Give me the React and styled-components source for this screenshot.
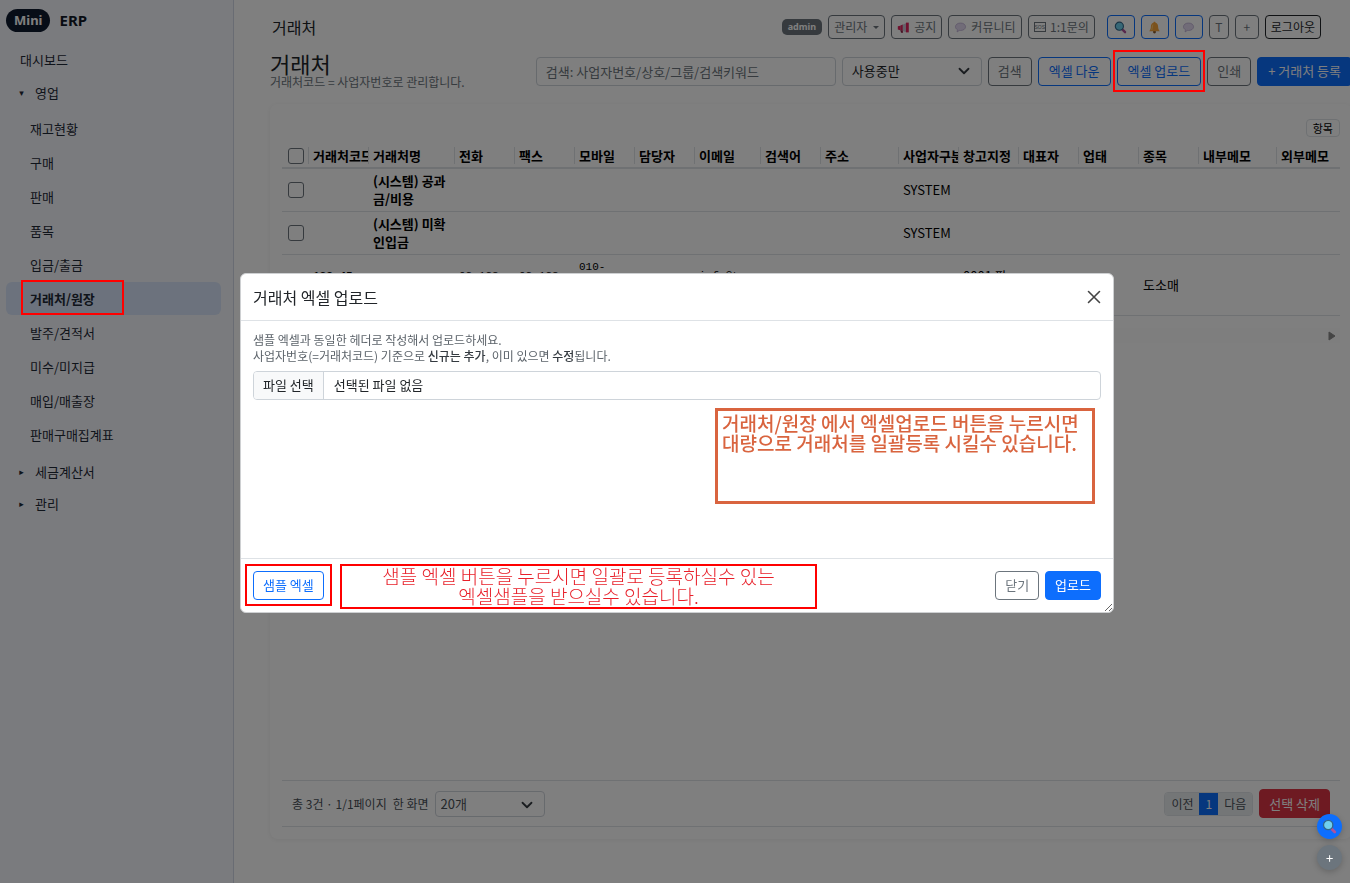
import React from "react";
import styled, { createGlobalStyle, css } from "styled-components";

const GlobalStyle = createGlobalStyle`
    *, *::before, *::after {
        box-sizing: border-box;
    }
    body {
        margin: 0;
        background: #fefefe;
        color: #212529;
        font-family: "Noto Sans CJK KR", "Noto Sans", sans-serif;
        font-size: 13px;
        line-height: 18px;
    }
    button, input, select {
        font: inherit;
        color: inherit;
    }
`

const salesMenu = [
    "재고현황",
    "구매",
    "판매",
    "품목",
    "입금/출금",
    "거래처/원장",
    "발주/견적서",
    "미수/미지급",
    "매입/매출장",
    "판매구매집계표",
];

const columns = [
    { label: "거래처코드", width: 60 },
    { label: "거래처명", width: 86 },
    { label: "전화", width: 60 },
    { label: "팩스", width: 60 },
    { label: "모바일", width: 60 },
    { label: "담당자", width: 60 },
    { label: "이메일", width: 66 },
    { label: "검색어", width: 60 },
    { label: "주소", width: 78 },
    { label: "사업자구분", width: 60 },
    { label: "창고지정", width: 60 },
    { label: "대표자", width: 60 },
    { label: "업태", width: 60 },
    { label: "종목", width: 60 },
    { label: "내부메모", width: 78 },
    { label: "외부메모", width: 64 },
];

const rows = [
    { name: "(시스템) 공과금/비용", kind: "SYSTEM" },
    { name: "(시스템) 미확인입금", kind: "SYSTEM" },
    {
        code: "123-45-67890",
        name: "샘플상사",
        phone: "02-123-4567",
        fax: "02-123-4568",
        mobile: "010-1234-5678",
        email: "info@test.com",
        store: "0001 판매",
        item: "도소매",
    },
];

function Magnifier({ size }) {
    return (
        <svg width={size} height={size} viewBox="0 0 16 16" aria-hidden="true">
            <path d="M9.6 9.8l4 4" stroke="#b0529a" strokeWidth="3" strokeLinecap="round" />
            <circle cx="6.6" cy="6.4" r="5" fill="#6fd0ee" stroke="#33688a" strokeWidth="1.4" />
        </svg>
    );
}

function Megaphone() {
    return (
        <svg width="13" height="13" viewBox="0 0 16 16" aria-hidden="true">
            <path d="M1 6.5l3-.8v5.6l-3-.8z" fill="#e0245e" />
            <path d="M4 5.7l7-3v11l-7-2.6z" fill="#c9c4d4" />
            <path d="M4 5.7l3-1.300v7.800l-3-1.100z" fill="#e0245e" />
            <path d="M11 2h3.500v12H11z" fill="#e0245e" />
            <path d="M4 11l1 3.500h2.500L7 12z" fill="#8d2145" />
        </svg>
    );
}

function Bubble() {
    return (
        <svg width="13" height="13" viewBox="0 0 16 16" aria-hidden="true">
            <path d="M8 2.500c3.600 0 6.200 2 6.200 4.600S11.600 11.700 8 11.700c-.5 0-1 0-1.500-.1L3.800 13.500l.4-2.800C2.700 9.900 1.800 8.600 1.800 7.100 1.800 4.500 4.400 2.500 8 2.500z" fill="#e2d8f0" stroke="#b3a3cc" strokeWidth=".8" />
        </svg>
    );
}

function Bell() {
    return (
        <svg width="13" height="13" viewBox="0 0 16 16" aria-hidden="true">
            <circle cx="8" cy="13.500" r="1.800" fill="#8a5a2b" />
            <path d="M8 1c-.9 0-1.300.6-1.300 1.300C4.300 3 3.600 5 3.500 7.500c-.1 2.300-.7 3.500-2 5h13c-1.300-1.500-1.900-2.700-2-5C12.400 5 11.700 3 9.300 2.300 9.300 1.600 8.900 1 8 1z" fill="#f7a53b" />
            <path d="M6 4.500C5.200 6 5.300 8.500 4.600 11" stroke="#ffd27a" strokeWidth="1.200" fill="none" />
        </svg>
    );
}

function Chevron() {
    return (
        <svg width="12" height="12" viewBox="0 0 16 16" fill="none" stroke="#343a40" strokeWidth="2.400" strokeLinecap="round" strokeLinejoin="round" aria-hidden="true">
            <path d="m2 5 6 6 6-6" />
        </svg>
    );
}

function Sidebar() {
    return (
        <Side>
            <Brand>
                <BrandBadge>Mini</BrandBadge>
                ERP
            </Brand>
            <Menu>
                <li><MenuLink href="#dashboard">대시보드</MenuLink></li>
                <li>
                    <GroupButton type="button" aria-expanded="true"><Caret>▾</Caret>영업</GroupButton>
                    <SubMenu>
                        {salesMenu.map((label) => {
                            const active = label === "거래처/원장";
                            return (
                                <SubItem key={label}>
                                    <MenuLink href="#menu" $sub $active={active}>{label}</MenuLink>
                                    {active && <MenuMarker />}
                                </SubItem>
                            );
                        })}
                    </SubMenu>
                </li>
                <li><GroupButton type="button" aria-expanded="false"><Caret>▸</Caret>세금계산서</GroupButton></li>
                <li><GroupButton type="button" aria-expanded="false"><Caret>▸</Caret>관리</GroupButton></li>
            </Menu>
        </Side>
    );
}

function TopBar() {
    return (
        <Top>
            <TopTitle>거래처</TopTitle>
            <UserBadge>admin</UserBadge>
            <SmallButton type="button">관리자 <DropCaret /></SmallButton>
            <SmallButton type="button"><Megaphone /> 공지</SmallButton>
            <SmallButton type="button"><Bubble /> 커뮤니티</SmallButton>
            <SmallButton type="button"><Sos>SOS</Sos>1:1문의</SmallButton>
            <IconGroup>
                <SmallButton type="button" $tone="#0d6efd" $min={28} aria-label="검색"><Magnifier size={13} /></SmallButton>
                <SmallButton type="button" $tone="#0d6efd" $min={28} aria-label="알림"><Bell /></SmallButton>
                <SmallButton type="button" $tone="#0d6efd" $min={28} aria-label="채팅"><Bubble /></SmallButton>
                <SmallButton type="button" $min={20}>T</SmallButton>
                <SmallButton type="button" $min={24}>+</SmallButton>
                <SmallButton type="button" $tone="#212529">로그아웃</SmallButton>
            </IconGroup>
        </Top>
    );
}

function CustomerTable() {
    return (
        <TableWrap>
            <Table>
                <colgroup>
                    <Col $width={27} />
                    {columns.map((c) => <Col key={c.label} $width={c.width} />)}
                </colgroup>
                <thead>
                    <tr>
                        <Th><Check type="checkbox" aria-label="전체 선택" /></Th>
                        {columns.map((c) => <Th key={c.label}>{c.label}</Th>)}
                    </tr>
                </thead>
                <tbody>
                    {rows.map((r) => (
                        <tr key={r.name}>
                            <Td><Check type="checkbox" aria-label={r.name} /></Td>
                            <Td $mono $bold>{r.code}</Td>
                            <Td $bold>{r.name}</Td>
                            <Td $mono>{r.phone}</Td>
                            <Td $mono>{r.fax}</Td>
                            <Td $mono>{r.mobile}</Td>
                            <Td />
                            <Td $mono>{r.email}</Td>
                            <Td />
                            <Td />
                            <Td>{r.kind}</Td>
                            <Td>{r.store}</Td>
                            <Td />
                            <Td />
                            <Td>{r.item}</Td>
                            <Td />
                            <Td />
                        </tr>
                    ))}
                </tbody>
            </Table>
            <ScrollTrack>
                <svg width="8" height="10" viewBox="0 0 8 10" aria-hidden="true">
                    <path d="M1 1v8l6-4z" fill="#8b8b8b" stroke="#8b8b8b" strokeLinejoin="round" />
                </svg>
            </ScrollTrack>
        </TableWrap>
    );
}

function UploadModal() {
    return (
        <Backdrop>
            <Dialog role="dialog" aria-labelledby="upload-title">
                <DialogHeader>
                    <DialogTitle id="upload-title">거래처 엑셀 업로드</DialogTitle>
                    <CloseButton type="button" aria-label="닫기">
                        <svg width="14" height="14" viewBox="0 0 14 14" stroke="#444" strokeWidth="1.600" strokeLinecap="round">
                            <path d="M1.500 1.500l11 11M12.500 1.500l-11 11" />
                        </svg>
                    </CloseButton>
                </DialogHeader>
                <DialogBody>
                    <Help>
                        샘플 엑셀과 동일한 헤더로 작성해서 업로드하세요.<br />
                        사업자번호(=거래처코드) 기준으로 <b>신규는 추가</b>, 이미 있으면 <b>수정</b>됩니다.
                    </Help>
                    <FileField htmlFor="excel-file">
                        <FileButton>파일 선택</FileButton>
                        <FileName>선택된 파일 없음</FileName>
                        <FileInput id="excel-file" type="file" />
                    </FileField>
                    <BodyNote>
                        거래처/원장 에서 엑셀업로드 버튼을 누르시면<br />
                        대량으로 거래처를 일괄등록 시킬수 있습니다.
                    </BodyNote>
                </DialogBody>
                <DialogFooter>
                    <Marked>
                        <Button type="button" $tone="#0d6efd">샘플 엑셀</Button>
                        <Marker $side={8} />
                    </Marked>
                    <FooterNote>
                        샘플 엑셀 버튼을 누르시면 일괄로 등록하실수 있는<br />
                        엑셀샘플을 받으실수 있습니다.
                    </FooterNote>
                    <FooterActions>
                        <Button type="button">닫기</Button>
                        <Button type="button" $tone="#0d6efd" $solid>업로드</Button>
                    </FooterActions>
                </DialogFooter>
            </Dialog>
        </Backdrop>
    );
}

function App() {
    return (
        <Page>
            <GlobalStyle />
            <Sidebar />
            <Main>
                <TopBar />
                <Content>
                    <Toolbar>
                        <Heading>
                            <h1>거래처</h1>
                            <p>거래처코드 = 사업자번호로 관리합니다.</p>
                        </Heading>
                        <SearchInput type="search" aria-label="검색어" placeholder="검색: 사업자번호/상호/그룹/검색키워드" />
                        <SelectBox $width={140}>
                            <select aria-label="사용 여부" defaultValue="use">
                                <option value="use">사용중만</option>
                            </select>
                            <Chevron />
                        </SelectBox>
                        <Button type="button">검색</Button>
                        <Button type="button" $tone="#0d6efd" $wide>엑셀 다운</Button>
                        <Marked>
                            <Button type="button" $tone="#0d6efd" $wide>엑셀 업로드</Button>
                            <Marker $side={4} />
                        </Marked>
                        <Button type="button">인쇄</Button>
                        <Button type="button" $tone="#0d6efd" $solid $wide>+ 거래처 등록</Button>
                    </Toolbar>
                    <Card>
                        <ColumnsButton type="button">항목</ColumnsButton>
                        <CustomerTable />
                        <CardFooter>
                            <span>총 3건 · 1/1페이지</span>
                            <label htmlFor="page-size">한 화면</label>
                            <SelectBox $width={110} $small>
                                <select id="page-size" defaultValue="20">
                                    <option value="20">20개</option>
                                </select>
                                <Chevron />
                            </SelectBox>
                            <Pager>
                                <PageButton type="button">이전</PageButton>
                                <PageButton type="button" $current>1</PageButton>
                                <PageButton type="button">다음</PageButton>
                            </Pager>
                            <Button type="button" $tone="#dc3545" $solid>선택 삭제</Button>
                        </CardFooter>
                    </Card>
                </Content>
            </Main>
            <UploadModal />
            <FloatingButtons>
                <RoundButton type="button" $tone="#0d6efd" aria-label="빠른 검색"><Magnifier size={15} /></RoundButton>
                <RoundButton type="button" $tone="#6c757d">+</RoundButton>
            </FloatingButtons>
        </Page>
    );
}

export default App

const Page = styled.div`
    display: flex;
    min-height: 100vh;
    overflow: hidden;
`
const Side = styled.aside`
    flex: 0 0 234px;
    padding: 9px 12px 9px 6px;
    background: #f5f7fc;
    border-right: 1px solid #d3d9e6;
    color: #1f2937;
`
const Brand = styled.div`
    display: flex;
    align-items: center;
    gap: 9px;
    margin-bottom: 11px;
    font-family: "Noto Sans", sans-serif;
    font-size: 15px;
    font-weight: 700;
    line-height: 23px;
    color: #111827;
`
const BrandBadge = styled.span`
    padding: 0 8px;
    border-radius: 12px;
    background: #0f1a2e;
    color: #fff;
    font-size: 13px;
`
const Menu = styled.ul`
    display: flex;
    flex-direction: column;
    gap: 1px;
    margin: 0;
    padding: 0;
    list-style: none;
`
const SubMenu = styled(Menu)`
    padding: 4px 0;
`
const SubItem = styled.li`
    position: relative;
`
const menuEntry = css`
    display: flex;
    align-items: center;
    width: 100%;
    border-radius: 6px;
    color: inherit;
`
const MenuLink = styled.a`
    ${menuEntry}
    height: 33px;
    padding: 0 ${(p) => (p.$sub ? 24 : 14)}px;
    background: ${(p) => (p.$active ? "#d8e5fa" : "transparent")};
    font-weight: ${(p) => (p.$active ? 700 : 400)};
    text-decoration: none;
`
const GroupButton = styled.button`
    ${menuEntry}
    height: 31px;
    gap: 10px;
    padding: 0 12px;
    border: 0;
    background: none;
`
const Caret = styled.span`
    width: 7px;
    font-family: "DejaVu Sans", sans-serif;
    font-size: 9px;
`
const redFrame = css`
    position: absolute;
    z-index: 20;
    border: 2px solid #f00;
    pointer-events: none;
`
const MenuMarker = styled.span`
    ${redFrame}
    inset: -2px 97px 0 15px;
`
const Marker = styled.span`
    ${redFrame}
    inset: -7px -${(p) => p.$side}px -6px;
`
const Marked = styled.span`
    position: relative;
    display: inline-flex;
`
const Main = styled.main`
    flex: 1;
    min-width: 0;
    display: flex;
    flex-direction: column;
    padding-left: 36px;
`
const Top = styled.header`
    display: flex;
    align-items: center;
    gap: 6px;
    padding: 15px 29px 0 2px;
`
const TopTitle = styled.div`
    margin-right: auto;
    font-size: 16px;
    line-height: 24px;
`
const UserBadge = styled.span`
    padding: 0 6px;
    border-radius: 5px;
    background: #6c757d;
    color: #fff;
    font-family: "Noto Sans", sans-serif;
    font-size: 9px;
    font-weight: 700;
    line-height: 16px;
`
const SmallButton = styled.button`
    display: inline-flex;
    align-items: center;
    justify-content: center;
    gap: 4px;
    min-width: ${(p) => p.$min || 0}px;
    height: 24px;
    padding: 0 5px;
    border: 1px solid ${(p) => p.$tone || "#6c757d"};
    border-radius: 4px;
    background: transparent;
    color: ${(p) => p.$tone || "#6c757d"};
    font-size: 12px;
    white-space: nowrap;
`
const DropCaret = styled.span`
    margin-left: 2px;
    border: 3px solid transparent;
    border-top-color: currentColor;
    border-bottom: 0;
`
const Sos = styled.span`
    border: 1px solid currentColor;
    font-family: "Liberation Sans Narrow", "Liberation Sans", sans-serif;
    font-size: 5px;
    line-height: 8px;
`
const IconGroup = styled.div`
    display: flex;
    gap: 6px;
    margin-left: 6px;
`
const Content = styled.section`
    flex: 1;
    display: flex;
    flex-direction: column;
    margin-right: -2px;
    padding-bottom: 44px;
`
const Toolbar = styled.div`
    display: flex;
    align-items: center;
    gap: 6px;
    padding-top: 13px;
`
const Heading = styled.div`
    flex: 1;
    white-space: nowrap;
    h1 {
        margin: 0;
        font-size: 22px;
        font-weight: 400;
        line-height: 22px;
    }
    p {
        margin: 0;
        color: #6c757d;
        font-size: 12px;
        line-height: 16px;
    }
`
const SearchInput = styled.input`
    width: 300px;
    height: 29px;
    padding: 0 9px;
    border: 1px solid #ced4da;
    border-radius: 4px;
    background: transparent;
    &::placeholder {
        color: #6c757d;
        opacity: 1;
    }
`
const SelectBox = styled.div`
    position: relative;
    width: ${(p) => p.$width}px;
    select {
        width: 100%;
        height: ${(p) => (p.$small ? 26 : 29)}px;
        padding: 0 ${(p) => (p.$small ? 5 : 9)}px;
        border: 1px solid #ced4da;
        border-radius: 4px;
        background: transparent;
        appearance: none;
    }
    svg {
        position: absolute;
        top: 8px;
        right: 12px;
        pointer-events: none;
    }
`
const Button = styled.button`
    height: 29px;
    padding: 0 ${(p) => (p.$wide ? 10 : 9)}px;
    border: 1px solid ${(p) => p.$tone || "#6c757d"};
    border-radius: 4px;
    background: ${(p) => (p.$solid ? p.$tone : "transparent")};
    color: ${(p) => (p.$solid ? "#fff" : p.$tone || "#6c757d")};
    white-space: nowrap;
`
const Card = styled.div`
    flex: 1;
    display: flex;
    flex-direction: column;
    margin-top: 14px;
    padding: 15px 12px 12px;
    border-radius: 8px;
    background: #fff;
    box-shadow: 0 1px 4px rgba(0, 0, 0, 0.06);
`
const ColumnsButton = styled.button`
    align-self: flex-end;
    height: 18px;
    padding: 0 6px;
    border: 1px solid #dee2e6;
    border-radius: 4px;
    background: transparent;
    color: #000;
    font-size: 11px;
    line-height: 14px;
`
const TableWrap = styled.div`
    flex: 1;
    margin-top: 7px;
    overflow: hidden;
`
const Table = styled.table`
    width: 100%;
    border-collapse: separate;
    border-spacing: 0;
    table-layout: fixed;
    color: #000;
`
const Col = styled.col`
    width: ${(p) => p.$width}px;
`
const Th = styled.th`
    position: relative;
    height: 25px;
    padding: 0 4px;
    border-bottom: 2px solid #dee2e6;
    overflow: hidden;
    text-align: left;
    white-space: nowrap;
    &:not(:last-child)::after {
        content: "";
        position: absolute;
        top: 3px;
        right: 0;
        height: 17px;
        border-right: 1px solid #dee2e6;
    }
`
const Td = styled.td`
    height: 43px;
    padding: 3px 4px;
    border-bottom: 1px solid #dee2e6;
    font-weight: ${(p) => (p.$bold ? 700 : 400)};
    vertical-align: middle;
    word-break: break-all;
    ${(p) => p.$mono && css`
        font-family: "Liberation Mono", monospace;
        font-size: 11px;
        word-break: normal;
        overflow-wrap: anywhere;
    `}
`
const Check = styled.input`
    display: block;
    width: 16px;
    height: 16px;
    margin: 0 2px;
    border: 1px solid #6c757d;
    border-radius: 3px;
    appearance: none;
`
const ScrollTrack = styled.div`
    display: flex;
    align-items: center;
    justify-content: flex-end;
    height: 15px;
    margin-top: 12px;
    padding: 0 4px;
    background: #fcfcfc;
`
const CardFooter = styled.div`
    display: flex;
    align-items: center;
    gap: 6px;
    height: 47px;
    padding: 0 10px;
    border: 1px solid #dee2e6;
    border-width: 1px 0;
    color: #495057;
    font-size: 12px;
    select, button {
        font-size: 13px;
    }
`
const Pager = styled.div`
    display: flex;
    margin-left: auto;
    border: 1px solid #dee2e6;
    border-radius: 4px;
    overflow: hidden;
`
const PageButton = styled.button`
    && {
        height: 22px;
        padding: 0 6px;
        border: 0;
        background: ${(p) => (p.$current ? "#0d6efd" : "#e9ecef")};
        color: ${(p) => (p.$current ? "#fff" : "#495057")};
        font-size: 12px;
    }
`
const Backdrop = styled.div`
    position: fixed;
    inset: 0;
    z-index: 10;
    display: flex;
    align-items: center;
    justify-content: center;
    padding: 16px 12px 14px 16px;
    background: rgba(0, 0, 0, 0.5);
`
const Dialog = styled.div`
    display: flex;
    flex-direction: column;
    width: 100%;
    max-width: 874px;
    min-height: 340px;
    border: 1px solid #ced0d2;
    border-radius: 6px;
    background: #fff;
    overflow: hidden;
    resize: both;
`
const DialogHeader = styled.div`
    display: flex;
    align-items: center;
    justify-content: space-between;
    height: 47px;
    padding: 0 12px;
    border-bottom: 1px solid #dee2e6;
`
const DialogTitle = styled.h2`
    margin: 0;
    font-size: 16px;
    font-weight: 400;
    line-height: 24px;
`
const CloseButton = styled.button`
    display: flex;
    padding: 0;
    border: 0;
    background: none;
`
const DialogBody = styled.div`
    flex: 1;
    position: relative;
    padding: 11px 12px;
`
const Help = styled.p`
    margin: 0 0 7px;
    color: #5c636a;
    font-size: 12px;
    line-height: 16px;
    b {
        color: #343a40;
        font-weight: 500;
    }
`
const FileField = styled.label`
    position: relative;
    display: flex;
    height: 29px;
    border: 1px solid #ced4da;
    border-radius: 4px;
    line-height: 26px;
    overflow: hidden;
`
const FileButton = styled.span`
    padding: 0 9px;
    border-right: 1px solid #ced4da;
    background: #f8f9fa;
`
const FileName = styled.span`
    padding: 0 10px;
`
const FileInput = styled.input`
    position: absolute;
    inset: 0;
    opacity: 0;
`
const BodyNote = styled.div`
    position: absolute;
    top: 87px;
    right: 18px;
    width: 380px;
    height: 96px;
    padding: 2px 4px;
    border: 3px solid #d9643f;
    color: #d9643f;
    font-size: 19px;
    font-weight: 500;
    line-height: 20px;
    white-space: nowrap;
`
const DialogFooter = styled.div`
    position: relative;
    display: flex;
    align-items: center;
    height: 54px;
    padding: 0 12px;
    border-top: 1px solid #dee2e6;
`
const FooterNote = styled.div`
    position: absolute;
    top: 5px;
    left: 99px;
    width: 477px;
    height: 45px;
    border: 2px solid #f00;
    color: #e8202a;
    font-size: 19px;
    font-weight: 300;
    line-height: 20px;
    text-align: center;
    white-space: nowrap;
`
const FooterActions = styled.div`
    display: flex;
    gap: 6px;
    margin-left: auto;
`
const FloatingButtons = styled.div`
    position: fixed;
    right: 8px;
    bottom: 13px;
    z-index: 30;
    display: flex;
    flex-direction: column;
    gap: 6px;
`
const RoundButton = styled.button`
    display: flex;
    align-items: center;
    justify-content: center;
    width: 25px;
    height: 25px;
    padding: 0;
    border: 0;
    border-radius: 50%;
    background: ${(p) => p.$tone};
    box-shadow: 0 2px 6px rgba(0, 0, 0, 0.2);
    color: #fff;
`
